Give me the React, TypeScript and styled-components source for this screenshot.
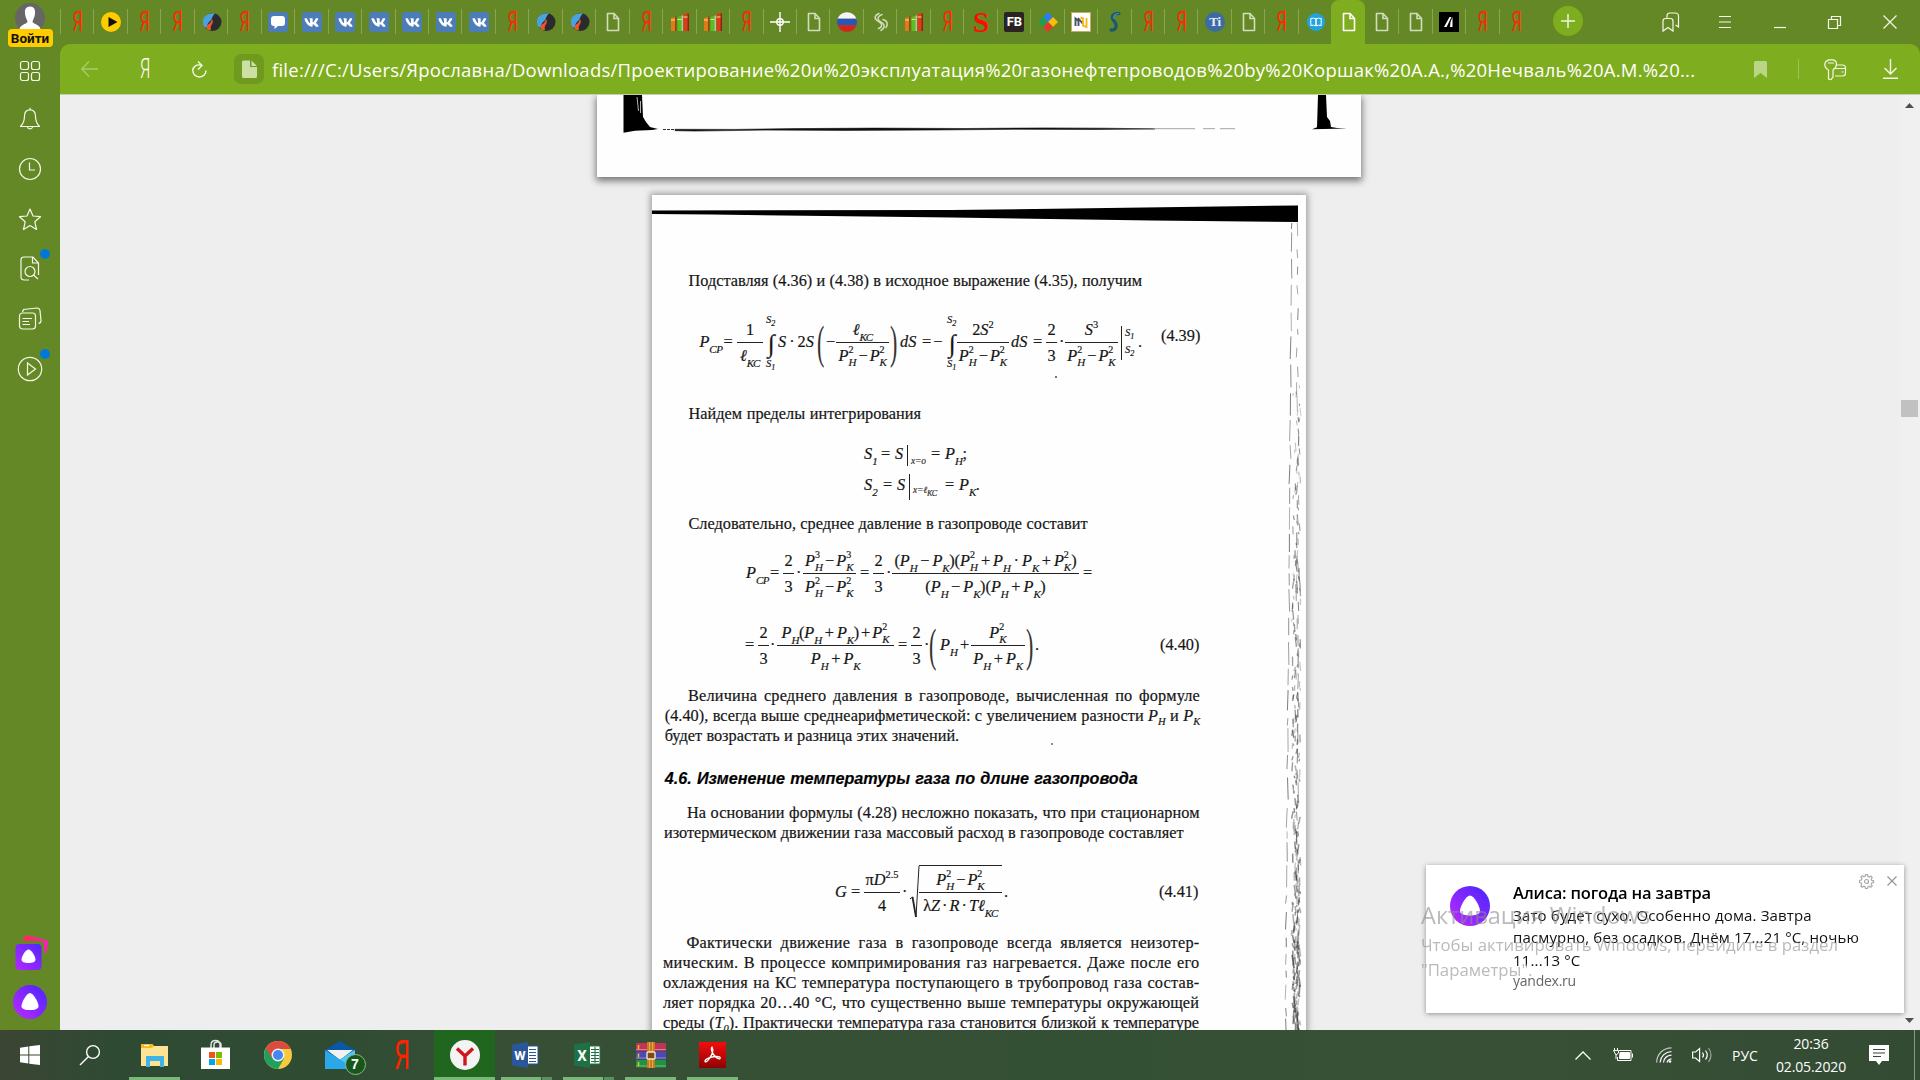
import React from "react";
import styled, { createGlobalStyle } from "styled-components";
import { FaVk } from "react-icons/fa";

const GlobalStyle = createGlobalStyle`
  * { box-sizing: border-box; }
  html, body { margin: 0; padding: 0; overflow: hidden; }
  body { background: #eeeeee; font-family: "Open Sans", "Noto Sans", sans-serif; }
  svg { display: block; flex: none; overflow: visible; }
`;

/* ---------- shell ---------- */

const Screen = styled.div`
  width: 1920px;
  height: 1080px;
  display: flex;
  flex-direction: column;
  overflow: hidden;
`;

const Browser = styled.div`
  flex: 1;
  min-height: 0;
  display: flex;
  background: #658826;
`;

const Sidebar = styled.aside`
  width: 60px;
  height: 1030px;
  display: flex;
  flex-direction: column;
  align-items: center;
`;

const Profile = styled.div`
  height: 48px;
  display: flex;
  flex-direction: column;
  align-items: center;
  padding-top: 3px;
`;

const LoginLabel = styled.span`
  width: 45px;
  height: 18px;
  margin-top: -4px;
  z-index: 1;
  border-radius: 4px;
  background: #ffcc00;
  color: #111;
  font: bold 13.5px/18px Roboto, sans-serif;
  text-align: center;
`;

const SideItem = styled.div<{ $dot?: boolean; $h?: number }>`
  position: relative;
  width: 60px;
  height: ${(p) => p.$h || 50}px;
  display: flex;
  align-items: center;
  justify-content: center;
  &::after {
    content: "";
    display: ${(p) => (p.$dot ? "block" : "none")};
    position: absolute;
    left: 40px;
    top: 5px;
    width: 10px;
    height: 10px;
    border-radius: 50%;
    background: #0078d7;
  }
`;

const SideSpacer = styled.div`
  flex: 1;
`;

const AliceGroup = styled.div`
  display: flex;
  flex-direction: column;
  align-items: center;
  gap: 14px;
  padding-bottom: 11px;
  & > :first-child { margin-left: 3px; }
`;

const Main = styled.main`
  flex: 1;
  min-width: 0;
  display: flex;
  flex-direction: column;
`;

/* ---------- tab strip ---------- */

const TabStrip = styled.div`
  height: 44px;
  display: flex;
`;

const Tabs = styled.div`
  width: 1472px;
  display: grid;
  grid-template-columns: repeat(44, 1fr);
`;

const Tab = styled.div<{ $active?: boolean; $line: boolean }>`
  position: relative;
  display: flex;
  align-items: center;
  justify-content: center;
  padding-left: 2px;
  background: ${(p) => (p.$active ? "#7fad20" : "transparent")};
  border-radius: ${(p) => (p.$active ? "8px 8px 0 0" : "0")};
  &::before {
    content: "";
    display: ${(p) => (p.$line ? "block" : "none")};
    position: absolute;
    left: 0;
    top: 9px;
    width: 1px;
    height: 25px;
    background: #8aa552;
  }
`;

const YaLetter = styled.span`
  color: #ff2a00;
  font: 27px/22px Roboto, sans-serif;
  transform: scaleX(0.6);
`;

const VkBox = styled.span`
  width: 20px;
  height: 20px;
  display: flex;
  align-items: center;
  justify-content: center;
  border-radius: 3px;
  background: #4d7db8;
  color: #fff;
  font-size: 15px;
`;

const Glyph = styled.span<{ $bg?: string; $fg: string; $round?: boolean; $font: string }>`
  width: 20px;
  height: 20px;
  display: flex;
  align-items: center;
  justify-content: center;
  background: ${(p) => p.$bg || "none"};
  color: ${(p) => p.$fg};
  border-radius: ${(p) => (p.$round ? "50%" : "2px")};
  font: ${(p) => p.$font};
`;

const NewTab = styled.div`
  width: 30px;
  height: 30px;
  margin: 6px 0 0 21px;
  border-radius: 50%;
  background: #7fad20;
  display: flex;
  align-items: center;
  justify-content: center;
`;

const WindowControls = styled.div`
  margin-left: auto;
  width: 277px;
  padding-right: 3px;
  display: grid;
  grid-template-columns: repeat(5, 1fr);
  align-items: center;
  justify-items: center;
`;

/* ---------- toolbar ---------- */

const Toolbar = styled.div`
  height: 51px;
  display: flex;
  align-items: center;
  background: #7fad20;
  border-bottom: 1px solid #c3cfae;
  border-radius: 10px 10px 0 0;
  padding: 0 22px 0 21px;
`;

const ThinYa = styled.span`
  width: 16px;
  margin-left: 39px;
  color: #fff;
  font: 300 27px/26px Roboto, sans-serif;
  transform: scaleX(0.62);
`;

const ReloadSlot = styled.span`
  margin-left: 39px;
`;

const FileBadge = styled.span`
  width: 30px;
  height: 30px;
  margin: 0 8px 0 27px;
  border-radius: 7px;
  background: #6f9a1f;
  display: flex;
  align-items: center;
  justify-content: center;
`;

const Address = styled.span`
  color: #fff;
  font: 18.5px/30px "Open Sans", "Noto Sans", sans-serif;
  letter-spacing: 0.235px;
  white-space: nowrap;
  padding-top: 1px;
`;

const ToolbarRight = styled.div`
  margin-left: auto;
  display: flex;
  align-items: center;
`;

const ToolDivider = styled.i`
  width: 1px;
  height: 20px;
  margin: 0 25px 0 31px;
  background: #9fc15a;
`;

const DownloadSlot = styled.span`
  margin-left: 37px;
`;

/* ---------- document ---------- */

const Viewport = styled.div`
  flex: 1;
  min-height: 0;
  height: 935px;
  display: flex;
  background: #eeeeee;
  overflow: hidden;
`;

const Pages = styled.div`
  width: 1840px;
  height: 935px;
  display: flex;
  flex-direction: column;
  align-items: center;
  overflow: hidden;
  padding-right: 2px;
`;

const ScrollTrack = styled.div`
  width: 20px;
  height: 935px;
  display: flex;
  flex-direction: column;
  align-items: center;
  padding: 8px 1px 7px 0;
  background: #f0f0f0;
`;

const ScrollThumb = styled.div`
  width: 17px;
  height: 17px;
  margin-top: 292px;
  margin-bottom: auto;
  background: #c1c1c1;
`;

const PreviousPage = styled.section`
  width: 764px;
  height: 82px;
  flex: none;
  background: #fefefe;
  box-shadow: 0 3px 7px 1px rgba(0, 0, 0, 0.5);
`;

const Page = styled.article`
  width: 654px;
  height: 900px;
  flex: none;
  margin-top: 18px;
  display: grid;
  background: #fefefe;
  box-shadow: 0 0 6px 2px rgba(0, 0, 0, 0.32);
  color: #141414;
  font: 16.3px/20px "Liberation Serif", serif;
  -webkit-text-stroke: 0.2px #222;
  & > * { grid-area: 1 / 1; }
`;

const PageText = styled.div`
  padding-top: 76px;
`;

const Line = styled.div<{ $x: number; $w: number; $gap?: number; $ls?: number }>`
  margin-left: ${(p) => p.$x}px;
  width: ${(p) => p.$w}px;
  height: 20px;
  margin-top: ${(p) => p.$gap || 0}px;
  letter-spacing: ${(p) => p.$ls || 0}px;
  white-space: nowrap;
  text-align: justify;
  text-align-last: justify;
`;

const Heading = styled(Line)`
  color: #000;
  font: italic bold 16.2px/20px "Liberation Sans", sans-serif;
`;

const Formula = styled.div<{ $x: number; $gap: number; $h?: number }>`
  margin-top: ${(p) => p.$gap}px;
  padding-left: ${(p) => p.$x}px;
  height: ${(p) => p.$h || 60}px;
  display: flex;
  align-items: center;
  white-space: nowrap;
`;

const Cell = styled.span<{ $w: number; $gap?: number; $up?: boolean }>`
  flex: none;
  width: ${(p) => p.$w}px;
  margin-left: ${(p) => p.$gap || 0}px;
  padding-bottom: ${(p) => (p.$up ? 15 : 3)}px;
  display: flex;
`;

const V = styled.i`
  font-style: italic;
`;

const Small = styled.i`
  height: 10px;
  margin-top: 12px;
  margin-bottom: -2px;
  font: italic 11px/10px "Liberation Serif", serif;
  letter-spacing: -0.5px;
`;

const InlineSub = styled.i`
  position: relative;
  top: 4px;
  font: italic 10.5px/10px "Liberation Serif", serif;
`;

const Stack = styled.span`
  display: inline-flex;
  flex-direction: column;
  justify-content: space-between;
  height: 22px;
  margin-top: -1px;
  margin-bottom: -1px;
  font: italic 11px/10px "Liberation Serif", serif;
  & > :first-child { font-style: normal; font-size: 10px; }
`;

const Superscript = styled.span`
  font: 10.5px/10px "Liberation Serif", serif;
`;

const Op = styled.span<{ $m?: number }>`
  margin: 0 ${(p) => p.$m ?? 2}px;
`;

const FractionBox = styled.span<{ $w: number; $gap?: number }>`
  flex: none;
  width: ${(p) => p.$w}px;
  margin-left: ${(p) => p.$gap || 0}px;
  height: 54px;
  display: grid;
  grid-template-rows: 26px 1px 27px;
  justify-items: center;
`;

const Numerator = styled.span`
  display: flex;
  align-self: end;
  padding-bottom: 2px;
`;

const Denominator = styled.span`
  display: flex;
  padding-top: 3px;
`;

const Rule = styled.i`
  width: 100%;
  height: 1px;
  background: #222;
`;

const IntegralBox = styled.span<{ $gap: number; $w: number }>`
  flex: none;
  width: ${(p) => p.$w}px;
  margin-left: ${(p) => p.$gap}px;
  display: flex;
  flex-direction: column;
  font: italic 10.5px/11px "Liberation Serif", serif;
  & > b { font: normal 25px/29px "Liberation Serif", serif; padding-left: 2px; }
`;

const Tiny = styled.span`
  font-size: 8px;
  vertical-align: -3px;
`;

const TallParen = styled.span<{ $gap: number }>`
  flex: none;
  width: 8px;
  margin-left: ${(p) => p.$gap}px;
  color: #333;
  font: 22px/22px "Liberation Serif", serif;
  -webkit-text-stroke: 0;
  transform: scaleY(2.15);
`;

const Limits = styled.span<{ $gap: number }>`
  flex: none;
  width: 17px;
  margin-left: ${(p) => p.$gap}px;
  padding-left: 3px;
  border-left: 1px solid #222;
  display: flex;
  flex-direction: column;
  font: italic 10.5px/13px "Liberation Serif", serif;
`;

const EvalBar = styled.i<{ $h: number }>`
  width: 1px;
  height: ${(p) => p.$h}px;
  margin-left: 3px;
  background: #222;
`;

const EvalSub = styled.i<{ $w: number }>`
  width: ${(p) => p.$w}px;
  margin-left: 3px;
  padding-top: 10px;
  font: italic 9.5px/10px "Liberation Serif", serif;
  letter-spacing: -0.2px;
  color: #444;
`;

const RootBox = styled.span`
  flex: none;
  display: flex;
  height: 54px;
  margin-left: 3px;
`;

const RootBody = styled.span`
  width: 83px;
  border-top: 1px solid #222;
  margin-top: -1px;
`;

/* ---------- notification ---------- */

const Notification = styled.aside`
  position: fixed;
  left: 1426px;
  top: 865px;
  width: 478px;
  height: 148px;
  display: flex;
  padding: 21px 12px 0 24px;
  background: #fff;
  box-shadow: 0 1px 5px rgba(0, 0, 0, 0.4);
`;

const NoticeText = styled.div`
  width: 348px;
  margin: -4px 0 0 23px;
  color: #111;
  font: 15px/22.4px "Open Sans", sans-serif;
  letter-spacing: 0.15px;
  white-space: nowrap;
`;

const NoticeTitle = styled.div`
  color: #000;
  font: 600 16.5px/22px "Open Sans", sans-serif;
  letter-spacing: -0.17px;
`;

const NoticeSource = styled.div`
  color: #666;
  font-size: 14px;
  line-height: 20px;
  letter-spacing: -0.25px;
`;

const NoticeActions = styled.div`
  margin: -14px 3px 0 auto;
  display: flex;
  align-items: center;
  gap: 13px;
  height: 18px;
`;

const Watermark = styled.div`
  position: fixed;
  left: 1421px;
  top: 898px;
  color: rgba(140, 140, 140, 0.6);
  font: 16.75px/25.4px "Open Sans", sans-serif;
  white-space: nowrap;
`;

const WatermarkTitle = styled.div`
  font-size: 23.6px;
  line-height: 34px;
`;

/* ---------- taskbar ---------- */

const Taskbar = styled.footer`
  height: 50px;
  flex: none;
  display: flex;
  background: linear-gradient(90deg, #3b4533 0, #2f4a33 110px, #2f4c33 330px, #375035 520px, #345034 1100px, #385136 1500px, #334b33 1920px);
`;

const TaskItem = styled.div<{ $w: number; $gap?: number; $bar?: boolean; $active?: boolean; $shift?: number }>`
  width: ${(p) => p.$w}px;
  margin-left: ${(p) => p.$gap || 0}px;
  height: 50px;
  display: flex;
  align-items: center;
  justify-content: center;
  background: ${(p) => (p.$active ? "#20661f" : "transparent")};
  border-bottom: 3px solid ${(p) => (p.$bar ? "#7ab87a" : "transparent")};
  padding-top: 3px;
  padding-left: ${(p) => p.$shift || 0}px;
`;

const StackedMark = styled.i`
  width: 10px;
  height: 3px;
  margin: 47px 0 0 1px;
  background: #5c8f5f;
`;

const TaskYa = styled.span`
  color: #ff2200;
  font: 41px/30px Roboto, sans-serif;
  transform: scaleX(0.62);
`;

const MailBox = styled.span`
  position: relative;
`;

const MailBadge = styled.span`
  position: absolute;
  left: 20px;
  top: 13px;
  width: 21px;
  height: 21px;
  border: 1px solid #8fb88f;
  border-radius: 50%;
  background: #17571b;
  color: #fff;
  font: bold 14px/19px "Liberation Sans", sans-serif;
  text-align: center;
`;

const Tray = styled.div`
  margin-left: auto;
  display: flex;
  align-items: center;
  color: #fff;
  font: 14px/23px "Open Sans", sans-serif;
`;

const TraySlot = styled.span<{ $w: number }>`
  width: ${(p) => p.$w}px;
  display: flex;
  justify-content: center;
  text-align: center;
`;

const Clock = styled.div`
  width: 78px;
  text-align: center;
  padding-bottom: 1px;
  letter-spacing: -0.12px;
`;

const ShowDesktop = styled.div`
  width: 6px;
  height: 50px;
  border-left: 1px solid #8a9a8a;
`;

/* ---------- icons ---------- */

const line = { fill: "none", stroke: "#f4f8e8", strokeWidth: 1.2 } as const;

const DocIcon = ({ color = "#d3dcbd" }: { color?: string }) => (
  <svg width="20" height="20" viewBox="0 0 20 20" fill="none" stroke={color} strokeWidth="1.6">
    <path d="M4.500 1.500h6.500l4.500 5V18.500H4.500z" strokeLinejoin="round" />
    <path d="M11 1.500v5H15.500" />
  </svg>
);

const PlayFav = () => (
  <svg width="20" height="20" viewBox="0 0 20 20">
    <circle cx="10" cy="10" r="10" fill="#ffcc00" />
    <path d="M7.500 5v10l9-5z" fill="#111" />
  </svg>
);

const FlameFav = () => (
  <svg width="20" height="20" viewBox="0 0 20 20">
    <circle cx="10.500" cy="10" r="9" fill="#2b2a2e" />
    <path d="M1 11C0 4 7 0 13 1.500 9 5 11 7 7 10c-2 2-2 5-2 6C2 15 1 13 1 11z" fill="#4aa3e0" />
    <path d="M5 17c-1-4 2-5 3-6s2-3 1.500-4.500c2.500 3 1 5 0 6.500S8.500 16 9 18c-2 0-3 0-4-1z" fill="#f0552c" />
  </svg>
);

const ChatFav = () => (
  <VkBox>
    <svg width="14" height="14" viewBox="0 0 14 14" fill="#fff">
      <path d="M3 1h8a3 3 0 0 1 3 3v4a3 3 0 0 1-3 3H7l-3.500 3v-3H3a3 3 0 0 1-3-3V4a3 3 0 0 1 3-3z" />
    </svg>
  </VkBox>
);

const BooksFav = () => (
  <svg width="20" height="20" viewBox="0 0 20 20">
    <path d="M1 6l4-1v14H1z" fill="#e07b1c" />
    <path d="M5 5l1.500-1v15H5z" fill="#8a4a10" />
    <path d="M7.500 5l4-1v15h-4z" fill="#56c022" />
    <path d="M11.500 4L13 3v16h-1.500z" fill="#b9c7a0" />
    <path d="M13.500 2l4-1v18h-4z" fill="#e03a1a" />
    <path d="M17.500 1l1.500 1v17h-1.500z" fill="#9c1c10" />
    <path d="M1 8h4M7.500 7.500h4M13.500 5h4" stroke="#ffd890" strokeWidth="1" />
  </svg>
);

const CrossFav = () => (
  <svg width="20" height="20" viewBox="0 0 20 20" fill="none" stroke="#fff" strokeWidth="1.400">
    <path d="M10 0v20M0 10h20" />
    <circle cx="10" cy="10" r="3.200" />
  </svg>
);

const FlagFav = () => (
  <svg width="20" height="20" viewBox="0 0 20 20">
    <path d="M0.600 6.800a10 10 0 0 1 18.800 0z" fill="#f5f5f5" />
    <path d="M0.600 6.800h18.800a10 10 0 0 1 0 6.400H0.600a10 10 0 0 1 0-6.400z" fill="#2a56b8" />
    <path d="M0.600 13.200h18.800a10 10 0 0 1-18.800 0z" fill="#d4241c" />
  </svg>
);

const SwirlFav = () => (
  <svg width="20" height="20" viewBox="0 0 20 20" fill="none" stroke="#d5dfbf" strokeWidth="1.500" strokeLinecap="round">
    <path d="M8 1.500C4 3 3 6 5.500 8l4.500 3.500c1.500 2 .5 4-2.500 5" />
    <path d="M11 2.500C7 4 6 6.500 8 8.500l4 3c2 2 1.500 5-2 7" />
    <path d="M12 7.500c4 1 5.500 4 3 8" />
  </svg>
);

const DiamondFav = () => (
  <svg width="20" height="20" viewBox="0 0 20 20">
    <path d="M10 0l5 5-5 5-5-5z" fill="#2f7bee" />
    <path d="M5 5l5 5-5 5-5-5z" fill="#1fa050" />
    <path d="M15 5l5 5-5 5-5-5z" fill="#fbbc05" />
    <path d="M10 10l5 5-5 5-5-5z" fill="#e5382c" />
  </svg>
);

const NFav = () => (
  <svg width="20" height="20" viewBox="0 0 20 20">
    <rect x="0.500" y="0.500" width="19" height="19" fill="#fff" stroke="#c9a86a" />
    <path d="M4.500 14V6.500l3 2.500v5M7 6l5 6" fill="none" stroke="#4a525e" strokeWidth="1.900" />
    <path d="M9.500 5.500l2.500 1v7l3.500 1.500V6" fill="none" stroke="#f3b81b" strokeWidth="1.900" />
  </svg>
);

const BlueSFav = () => (
  <svg width="20" height="20" viewBox="0 0 20 20" fill="none" strokeLinecap="round">
    <path d="M14 1.500C9 1 6 3.500 8 7.500c2 3 4 4 3 7.500-.7 2.500-3 3.500-5 3" stroke="#1d5872" strokeWidth="3.200" />
    <path d="M13.500 1.500C10.500 1.500 8 3.500 9 6.500" stroke="#4f98a9" strokeWidth="1.200" />
  </svg>
);

const BookFav = () => (
  <svg width="18" height="18" viewBox="0 0 18 18">
    <circle cx="9" cy="9" r="9" fill="#22a3dc" />
    <path d="M3.800 5.500q3-.8 5.200.3v7q-2.200-1-5.200-.3zM9 5.800q2.200-1.100 5.200-.3v7q-3-.7-5.200.3z" fill="none" stroke="#fff" strokeWidth="1" />
  </svg>
);

const BlackAFav = () => (
  <svg width="20" height="20" viewBox="0 0 20 20">
    <rect width="20" height="20" fill="#000" />
    <path d="M5 15l5.500-10h2L7.500 15zM11.500 10l2-5v10h-2.500z" fill="#fff" />
  </svg>
);

const AliceIcon = ({ size, id }: { size: number; id: string }) => (
  <svg width={size} height={size} viewBox="0 0 40 40">
    <defs>
      <linearGradient id={id} x1="0" y1="1" x2="1" y2="0">
        <stop offset="0.100" stopColor="#b528ff" />
        <stop offset="0.900" stopColor="#5226ff" />
      </linearGradient>
    </defs>
    <circle cx="20" cy="20" r="20" fill={`url(#${id})`} />
    <path d="M20 9.500c4 0 10 11 10 15.500 0 3.500-5 4.500-10 4.500s-10-1-10-4.500c0-4.500 6-15.500 10-15.500z" fill="#fff" />
  </svg>
);

const AliceCards = () => (
  <svg width="34" height="36" viewBox="0 0 34 36">
    <defs>
      <linearGradient id="cardFill" x1="0" y1="1" x2="1" y2="0">
        <stop offset="0" stopColor="#b528ff" />
        <stop offset="1" stopColor="#5226ff" />
      </linearGradient>
      <linearGradient id="cardBack" x1="0" y1="0" x2="1" y2="0">
        <stop offset="0" stopColor="#ff2b4e" />
        <stop offset="1" stopColor="#ff1cc0" />
      </linearGradient>
    </defs>
    <path d="M8 6l1-4q1-2 4-1.500l17 4q3.500 1 3 4l-2 10-2-1V10q0-4-4-4z" fill="url(#cardBack)" />
    <rect x="0.500" y="9" width="26" height="26" rx="4" fill="url(#cardFill)" />
    <path d="M13.500 14.500c3 0 7 7 7 10 0 2.500-3 3.500-7 3.500s-7-1-7-3.500c0-3 4-10 7-10z" fill="#fff" />
  </svg>
);

const MarginNoise = () => {
  let seed = 7;
  const rnd = () => {
    seed = (seed * 16807) % 2147483647;
    return seed / 2147483647;
  };
  const marks: React.ReactNode[] = [];
  const add = (x: number, y: number, h: number, w: number, o: number) =>
    marks.push(
      <path key={marks.length} d={`M${x.toFixed(1)} ${y.toFixed(1)}l${((rnd() - 0.5) * w * 2).toFixed(1)} ${h.toFixed(1)}`} strokeWidth={w} opacity={o} />
    );
  for (let y = 28; y < 835; ) {
    const d = y / 835;
    const h = 6 + rnd() * 18;
    add(640 - d * 6.500, y, h, 0.900, 0.400 + rnd() * 0.350);
    y += h + 2 + rnd() * 7;
  }
  for (let y = 28; y < 835; ) {
    const d = y / 835;
    const h = 4 + rnd() * 12;
    add(644.500 + rnd() * 2, y, h, 0.900, 0.350 + rnd() * 0.350);
    y += h + 1 + rnd() * (14 - 9 * d);
  }
  for (let y = 190; y < 835; ) {
    const d = y / 835;
    add(641 + rnd() * 8 - d, y, 2 + rnd() * 8, 0.800 + d * 0.900, 0.250 + rnd() * 0.350);
    y += 0.800 + rnd() * (11 - 10.500 * d);
  }
  return (
    <svg width="654" height="835" viewBox="0 0 654 835" fill="none" stroke="#333">
      <path d="M0 15.500L300 15 646 10.500V27L500 25.500 300 22.500 60 19.500 0 19z" fill="#000" stroke="none" />
      <circle cx="404" cy="182" r="0.900" fill="#333" stroke="none" />
      <circle cx="400" cy="549" r="0.900" fill="#555" stroke="none" />
      {marks}
    </svg>
  );
};

const ScanFrame = () => (
  <svg width="764" height="82" viewBox="0 0 764 82">
    <path d="M26.500 0H45l1 22 3 5 4 5 8 2-6 1-17 .8-11.500 2z" fill="#000" />
    <path d="M40 2l1.500 14M43.500 6v12" stroke="#fff" strokeWidth="0.700" />
    <path d="M66 34.500h12" stroke="#333" strokeWidth="1.200" strokeDasharray="3 1" />
    <path d="M78 34.300l60 .1 60-.8 80-.5 90 .4 80-.6 60 .3 50 .7-60 .6-80-.2-80 .7-90 .4-80-.3-70 1-20-.4z" fill="#111" stroke="#111" strokeWidth="0.600" />
    <path d="M556 33.700h42m8 0h12m5 0h15" stroke="#999" strokeWidth="0.900" />
    <path d="M721 0h8l1 22 3 4 1 6 6 1 10 .5-35 .8 5-2z" fill="#000" />
  </svg>
);

const favicon = (kind: string) => {
  switch (kind) {
    case "ya": return <YaLetter>Я</YaLetter>;
    case "play": return <PlayFav />;
    case "flame": return <FlameFav />;
    case "chat": return <ChatFav />;
    case "vk": return <VkBox><FaVk /></VkBox>;
    case "books": return <BooksFav />;
    case "cross": return <CrossFav />;
    case "flag": return <FlagFav />;
    case "swirl": return <SwirlFav />;
    case "s": return <Glyph $fg="#ff0d00" $font='bold 29px/20px "Liberation Serif", serif'>S</Glyph>;
    case "fb": return <Glyph $bg="#2a2324" $fg="#fff" $font='bold 13px/20px Roboto, sans-serif'>FB</Glyph>;
    case "diamond": return <DiamondFav />;
    case "n": return <NFav />;
    case "blue-s": return <BlueSFav />;
    case "ti": return <Glyph $bg="#3c6ba5" $fg="#e8eef8" $round $font='bold 13px/20px "Liberation Serif", serif'>Ti</Glyph>;
    case "book": return <BookFav />;
    case "a": return <BlackAFav />;
    case "active": return <DocIcon color="#fff" />;
    default: return <DocIcon />;
  }
};

const tabs =
  "ya play ya ya flame ya chat vk vk vk vk vk vk ya flame flame doc ya books books ya cross doc flag swirl books ya s fb diamond n blue-s ya ya ti doc ya book active doc doc a ya ya".split(" ");

/* ---------- formula parts ---------- */

const Var = ({ b = "P", sub, sup }: { b?: string; sub?: string; sup?: string }) => (
  <>
    <V>{b}</V>
    {sup ? <Stack><span>{sup}</span><span>{sub}</span></Stack> : <Small>{sub}</Small>}
  </>
);

const Frac = ({ w, gap, n, d }: { w: number; gap?: number; n: React.ReactNode; d: React.ReactNode }) => (
  <FractionBox $w={w} $gap={gap}>
    <Numerator>{n}</Numerator>
    <Rule />
    <Denominator>{d}</Denominator>
  </FractionBox>
);

const TwoThirds = ({ gap }: { gap: number }) => <Frac w={11} gap={gap} n="2" d="3" />;

const Integral = ({ gap, w }: { gap: number; w: number }) => (
  <IntegralBox $gap={gap} $w={w}>
    <span>S<Tiny>2</Tiny></span>
    <b>∫</b>
    <span>S<Tiny>1</Tiny></span>
  </IntegralBox>
);

const diffOf = (p: string) => (
  <>
    <Var sub="H" sup={p} /><Op>−</Op><Var sub="К" sup={p} />
  </>
);

export default function App() {
  return (
    <Screen>
      <GlobalStyle />
      <Browser>
        <Sidebar>
          <Profile>
            <svg width="30" height="30" viewBox="0 0 30 30">
              <circle cx="15" cy="15" r="15" fill="#666" />
              <path d="M15 3.500c4 0 5.500 3 5 7-.3 4-2 6-2.500 8 .5 3 7 2.500 8 7.500H4.500c1-5 7.500-4.500 8-7.500-.5-2-2.200-4-2.500-8-.5-4 1-7 5-7z" fill="#fff" />
            </svg>
            <LoginLabel>Войти</LoginLabel>
          </Profile>
          <SideItem $h={46}>
            <svg width="22" height="22" viewBox="0 0 22 22" {...line}>
              <rect x="1.500" y="1.500" width="8" height="8" rx="2" /><rect x="12.500" y="1.500" width="8" height="8" rx="2" />
              <rect x="1.500" y="12.500" width="8" height="8" rx="2" /><rect x="12.500" y="12.500" width="8" height="8" rx="2" />
            </svg>
          </SideItem>
          <SideItem>
            <svg width="22" height="24" viewBox="0 0 22 24" {...line}>
              <path d="M11 .8v2M11 2.800c-4 0-5.500 3-5.500 6.200 0 5-1 7.500-4 10.500h19C17.500 16.500 16.500 14 16.500 9c0-3.200-1.500-6.200-5.500-6.200zM8.500 20c.5 2.500 4.500 2.500 5 0" strokeLinejoin="round" />
            </svg>
          </SideItem>
          <SideItem>
            <svg width="24" height="24" viewBox="0 0 24 24" {...line}>
              <circle cx="12" cy="12" r="10.500" /><path d="M11.500 5.500v7.500H17" />
            </svg>
          </SideItem>
          <SideItem>
            <svg width="24" height="24" viewBox="0 0 24 24" {...line}>
              <path d="M12 2l3 7 7.500.7-5.700 5 1.700 7.800L12 18.500l-6.500 4 1.700-7.800-5.700-5L9 9z" strokeLinejoin="round" />
            </svg>
          </SideItem>
          <SideItem $dot>
            <svg width="20" height="26" viewBox="0 0 20 26" {...line}>
              <path d="M9 24H4.500Q1 24 1 21V4q0-3 3-3h9l5.500 6v12M12.500 1v6h6" />
              <circle cx="10" cy="15.500" r="5" /><path d="M13.500 19l4.500 4" />
            </svg>
          </SideItem>
          <SideItem>
            <svg width="24" height="24" viewBox="0 0 24 24" {...line}>
              <rect x="1.500" y="6" width="16" height="16" rx="3" />
              <path d="M4.500 5l1-2.500L19 1q2.500 0 3 2.500l1 10q0 2.500-2.500 3M4.500 11.500H14M4.500 14.500H11M4.500 17.500H12" />
            </svg>
          </SideItem>
          <SideItem $dot>
            <svg width="26" height="26" viewBox="0 0 26 26" {...line}>
              <circle cx="13" cy="13" r="11.700" /><path d="M10.500 7v12l8-6z" />
            </svg>
          </SideItem>
          <SideSpacer />
          <AliceGroup>
            <AliceCards />
            <AliceIcon size={34} id="aliceSide" />
          </AliceGroup>
        </Sidebar>

        <Main>
          <TabStrip>
            <Tabs>
              {tabs.map((t, i) => (
                <Tab key={i} $active={t === "active"} $line={t !== "active" && tabs[i - 1] !== "active"}>
                  {favicon(t)}
                </Tab>
              ))}
            </Tabs>
            <NewTab>
              <svg width="14" height="14" viewBox="0 0 14 14" stroke="#eef5dc" strokeWidth="1.500"><path d="M7 0v14M0 7h14" /></svg>
            </NewTab>
            <WindowControls>
              <svg width="17" height="20" viewBox="0 0 17 20" {...line}>
                <path d="M1 19V9q0-2.500 2.500-2.500h5Q11 6.500 11 9v10l-5-3.500zM5 6V4q0-3 3-3h5q3.500 0 3.500 3v11l-3-2" />
              </svg>
              <svg width="12" height="12" viewBox="0 0 12 12" {...line}><path d="M0 .5h12M0 6h12M0 11.500h12" /></svg>
              <svg width="12" height="12" viewBox="0 0 12 12" {...line}><path d="M0 11.500h12" /></svg>
              <svg width="13" height="13" viewBox="0 0 13 13" {...line}><path d="M.5 3.500h9v9h-9zM3.500 3.500v-3h9v9h-3" /></svg>
              <svg width="14" height="14" viewBox="0 0 14 14" {...line}><path d="M.5.5l13 13M13.500.5l-13 13" /></svg>
            </WindowControls>
          </TabStrip>

          <Toolbar>
            <svg width="17" height="16" viewBox="0 0 17 16" fill="none" stroke="#a9cc68" strokeWidth="1.300"><path d="M8 .5L.8 8 8 15.500M.8 8H17" /></svg>
            <ThinYa>Я</ThinYa>
            <ReloadSlot>
              <svg width="15" height="17" viewBox="0 0 15 17" {...line} strokeWidth="1.400"><path d="M6 .5l4 4-4 4M9.500 4.200C4 3 .8 6 .8 9.500S3.500 16 7.500 16s6.500-3 6.500-6.500" /></svg>
            </ReloadSlot>
            <FileBadge>
              <svg width="15" height="18" viewBox="0 0 15 18" fill="#cbe0a5"><path d="M0 2q0-1.500 1.500-1.500H8V7h7v9.500q0 1.500-1.500 1.500h-12Q0 18 0 16.500zM9.500.5L15 6H9.500z" /></svg>
            </FileBadge>
            <Address>
              file:///C:/Users/Ярославна/Downloads/Проектирование%20и%20эксплуатация%20газонефтепроводов%20by%20Коршак%20А.А.,%20Нечваль%20А.М.%20...
            </Address>
            <ToolbarRight>
              <svg width="13" height="17" viewBox="0 0 13 17" fill="#b9d585"><path d="M0 1.500Q0 0 1.500 0h10Q13 0 13 1.500V17l-6.500-5L0 17z" /></svg>
              <ToolDivider />
              <svg width="22" height="21" viewBox="0 0 22 21" {...line}>
                <path d="M4.500 20V11Q.8 9 .8 5.500T5 .8h4Q12.500 1.500 12.500 5T9 11v7l-2 2.500zM4 4h6M12.500 6h6q3 0 3 3v5q0 3-3 3H11M11 9.500h10.500M17.500 13h2" />
              </svg>
              <DownloadSlot>
                <svg width="15" height="20" viewBox="0 0 15 20" {...line} strokeWidth="1.400"><path d="M7.500 0v15M1.500 9l6 6 6-6M0 19.300h15" /></svg>
              </DownloadSlot>
            </ToolbarRight>
          </Toolbar>

          <Viewport>
            <Pages>
              <PreviousPage><ScanFrame /></PreviousPage>
              <Page>
                <MarginNoise />
                <PageText>
                  <Line $x={36.5} $w={453.500}>Подставляя (4.36) и (4.38) в исходное выражение (4.35), получим</Line>

                  <Formula $x={47.4} $gap={22}>
                    <Cell $w={21}><Var sub="CP" /></Cell>
                    <Cell $w={10} $gap={3}>=</Cell>
                    <Frac w={26} gap={3.600} n="1" d={<Var b="ℓ" sub=" КС" />} />
                    <Integral gap={3} w={12} />
                    <Cell $w={38}><V>S</V><Op $m={3}>·</Op>2<V>S</V></Cell>
                    <TallParen $gap={1}>(</TallParen>
                    <Cell $w={8} $gap={1}>−</Cell>
                    <Frac w={52.500} gap={2.500} n={<Var b="ℓ" sub=" КС" />} d={diffOf("2")} />
                    <TallParen $gap={1}>)</TallParen>
                    <Cell $w={20} $gap={2}><V>dS</V></Cell>
                    <Cell $w={22} $gap={2}>=<Op $m={2}>−</Op></Cell>
                    <Integral gap={3} w={10} />
                    <Frac w={52} n={<>2<V>S</V><Superscript>2</Superscript></>} d={diffOf("2")} />
                    <Cell $w={20} $gap={2}><V>dS</V></Cell>
                    <Cell $w={11} $gap={2}>=</Cell>
                    <TwoThirds gap={2} />
                    <Cell $w={5} $gap={2}>·</Cell>
                    <Frac w={53} gap={1} n={<><V>S</V><Superscript>3</Superscript></>} d={diffOf("2")} />
                    <Limits $gap={3}><span>S<Tiny>1</Tiny></span><span>S<Tiny>2</Tiny></span></Limits>
                    <Cell $w={5} $gap={0}>.</Cell>
                    <Cell $w={41} $gap={18} $up>(4.39)</Cell>
                  </Formula>

                  <Line $x={36.5} $w={232.500} $gap={31}>Найдем пределы интегрирования</Line>

                  <Formula $x={212} $gap={16} $h={31}>
                    <Cell $w={14}><Var b="S" sub="1" /></Cell>
                    <Cell $w={10} $gap={3}>=</Cell>
                    <Cell $w={9} $gap={4}><V>S</V></Cell>
                    <EvalBar $h={21} />
                    <EvalSub $w={18}>x=o</EvalSub>
                    <Cell $w={10} $gap={2}>=</Cell>
                    <Cell $w={24} $gap={4}><Var sub="H" />;</Cell>
                  </Formula>
                  <Formula $x={212} $gap={0} $h={31}>
                    <Cell $w={16}><Var b="S" sub="2" /></Cell>
                    <Cell $w={10} $gap={3}>=</Cell>
                    <Cell $w={9} $gap={4}><V>S</V></Cell>
                    <EvalBar $h={26} />
                    <EvalSub $w={28}>x=ℓ<Tiny>КС</Tiny></EvalSub>
                    <Cell $w={10} $gap={4}>=</Cell>
                    <Cell $w={24} $gap={4}><Var sub="К" />.</Cell>
                  </Formula>

                  <Line $x={36.5} $w={399} $gap={12}>Следовательно, среднее давление в газопроводе составит</Line>

                  <Formula $x={94} $gap={10}>
                    <Cell $w={21}><Var sub="CP" /></Cell>
                    <Cell $w={10} $gap={3}>=</Cell>
                    <TwoThirds gap={3} />
                    <Cell $w={5} $gap={2}>·</Cell>
                    <Frac w={53.400} gap={1.600} n={diffOf("3")} d={diffOf("2")} />
                    <Cell $w={10} $gap={4}>=</Cell>
                    <TwoThirds gap={3} />
                    <Cell $w={5} $gap={2}>·</Cell>
                    <Frac
                      w={187}
                      gap={1}
                      n={<>(<Var sub="H" /><Op $m={3}>−</Op><Var sub="К" />)(<Var sub="H" sup="2" /><Op $m={3}>+</Op><Var sub="H" /><Op $m={3}>·</Op><Var sub="К" /><Op $m={3}>+</Op><Var sub="К" sup="2" />)</>}
                      d={<>(<Var sub="H" /><Op $m={3}>−</Op><Var sub="К" />)(<Var sub="H" /><Op $m={3}>+</Op><Var sub="К" />)</>}
                    />
                    <Cell $w={10} $gap={4}>=</Cell>
                  </Formula>

                  <Formula $x={93} $gap={12}>
                    <Cell $w={10}>=</Cell>
                    <TwoThirds gap={3} />
                    <Cell $w={5} $gap={1}>·</Cell>
                    <Frac
                      w={117}
                      gap={2}
                      n={<><Var sub="H" />(<Var sub="H" /><Op $m={3}>+</Op><Var sub="К" />)<Op>+</Op><Var sub="К" sup="2" /></>}
                      d={<><Var sub="H" /><Op $m={3}>+</Op><Var sub="К" /></>}
                    />
                    <Cell $w={10} $gap={4}>=</Cell>
                    <TwoThirds gap={3} />
                    <Cell $w={4} $gap={2}>·</Cell>
                    <TallParen $gap={1}>(</TallParen>
                    <Cell $w={16} $gap={3}><Var sub="H" /></Cell>
                    <Cell $w={9} $gap={4}>+</Cell>
                    <Frac w={54} gap={2} n={<Var sub="К" sup="2" />} d={<><Var sub="H" /><Op $m={3}>+</Op><Var sub="К" /></>} />
                    <TallParen $gap={1}>)</TallParen>
                    <Cell $w={4} $gap={1}>.</Cell>
                    <Cell $w={41} $gap={121}>(4.40)</Cell>
                  </Formula>

                  <Line $x={36} $w={512} $gap={10} $ls={0.180}>Величина среднего давления в газопроводе, вычисленная по формуле</Line>
                  <Line $x={12.700} $w={535.500} $ls={0.020}>
                    (4.40), всегда выше среднеарифметической: с увеличением разности <V>P</V><InlineSub>H</InlineSub> и <V>P</V><InlineSub>К</InlineSub>
                  </Line>
                  <Line $x={12.700} $w={294.500}>будет возрастать и разница этих значений.</Line>

                  <Heading $x={12.700} $w={473} $gap={22}>4.6. Изменение температуры газа по длине газопровода</Heading>

                  <Line $x={35} $w={512.500} $gap={15} $ls={0.050}>На основании формулы (4.28) несложно показать, что при стационарном</Line>
                  <Line $x={12} $w={519.500}>изотермическом движении газа массовый расход в газопроводе составляет</Line>

                  <Formula $x={183} $gap={20}>
                    <Cell $w={13}><V>G</V></Cell>
                    <Cell $w={10} $gap={3}>=</Cell>
                    <Frac w={36} gap={3} n={<>π<V>D</V><Superscript>2.5</Superscript></>} d="4" />
                    <Cell $w={5} $gap={2}>·</Cell>
                    <RootBox>
                      <svg width="9" height="54" viewBox="0 0 9 54" fill="none" stroke="#222">
                        <path d="M0 33l2.500-2" strokeWidth="1" />
                        <path d="M2.500 31l3.500 20" strokeWidth="1.800" />
                        <path d="M6 51L9 0" strokeWidth="1" />
                      </svg>
                      <RootBody>
                        <Frac w={83} n={diffOf("2")} d={<>λ<V>Z</V><Op>·</Op><V>R</V><Op>·</Op><V>T</V><Var b="ℓ" sub="КС" /></>} />
                      </RootBody>
                    </RootBox>
                    <Cell $w={4} $gap={2}>.</Cell>
                    <Cell $w={41} $gap={151}>(4.41)</Cell>
                  </Formula>

                  <Line $x={34.500} $w={513} $gap={10} $ls={0.250}>Фактически движение газа в газопроводе всегда является неизотер-</Line>
                  <Line $x={11} $w={536.500} $ls={0.250}>мическим. В процессе компримирования газ нагревается. Даже после его</Line>
                  <Line $x={11} $w={536.500} $ls={0.200}>охлаждения на КС температура поступающего в трубопровод газа состав-</Line>
                  <Line $x={11} $w={536} $ls={0.100}>ляет порядка 20…40 °C, что существенно выше температуры окружающей</Line>
                  <Line $x={11} $w={536} $ls={-0.050}>
                    среды (<V>T</V><InlineSub>0</InlineSub>). Практически температура газа становится близкой к температуре
                  </Line>
                </PageText>
              </Page>
            </Pages>
            <ScrollTrack>
              <svg width="9" height="5" viewBox="0 0 9 5"><path d="M4.500 0L9 5H0z" fill="#505050" /></svg>
              <ScrollThumb />
              <svg width="9" height="5" viewBox="0 0 9 5"><path d="M0 0h9L4.500 5z" fill="#505050" /></svg>
            </ScrollTrack>
          </Viewport>
        </Main>
      </Browser>

      <Taskbar>
        <TaskItem $w={60}>
          <svg width="20" height="20" viewBox="0 0 20 20" fill="#fff"><path d="M0 2.700l8.300-1.200v8H0zM9.300 1.300L20 0v9.500H9.300zM0 10.500h8.300v8L0 17.300zM9.300 10.500H20V20L9.300 18.700z" /></svg>
        </TaskItem>
        <TaskItem $w={60}>
          <svg width="20" height="20" viewBox="0 0 20 20" fill="none" stroke="#fff" strokeWidth="1.400"><circle cx="13" cy="7" r="6.400" /><path d="M8.500 11.500L0 20" /></svg>
        </TaskItem>
        <TaskItem $w={51} $gap={9} $bar>
          <svg width="28" height="24" viewBox="0 0 28 24">
            <path d="M0 1.500Q0 1 1 1h10l2 2h14v20H0z" fill="#ffe394" />
            <path d="M0 1.500Q0 1 1 1h10l2 2-2 2H0z" fill="#f5b921" />
            <path d="M3 2.500h5" stroke="#fff" strokeWidth="1.200" />
            <path d="M5 24V13h18v11h-4v-6h-10v6z" fill="#3db3e8" />
          </svg>
        </TaskItem>
        <TaskItem $w={51} $gap={10}>
          <svg width="30" height="30" viewBox="0 0 30 30">
            <path d="M10 8V5q0-4.500 4.500-4.500T19 5v3M13 8V5q0-3 3.500-3T20 5v3" fill="none" stroke="#dfe5df" strokeWidth="1.500" />
            <path d="M0 7.500h29V29H0z" fill="#fff" />
            <path d="M8 12h6v6H8z" fill="#f1511b" /><path d="M15 12h6v6h-6z" fill="#80bb03" />
            <path d="M8 19h6v6H8z" fill="#03a4ee" /><path d="M15 19h6v6h-6z" fill="#fbb809" />
          </svg>
        </TaskItem>
        <TaskItem $w={51} $gap={11}>
          <svg width="28" height="28" viewBox="0 0 28 28">
            <circle cx="14" cy="14" r="14" fill="#fbc93d" />
            <path d="M14 14L1.900 7A14 14 0 0 0 14 28l6-10.500z" fill="#1fa15d" />
            <path d="M14 8h12.600A14 14 0 0 0 1.900 7l6.100 10.500z" fill="#dc4b3f" />
            <circle cx="14" cy="14" r="6.500" fill="#f1f1f1" /><circle cx="14" cy="14" r="5" fill="#4688f1" />
          </svg>
        </TaskItem>
        <TaskItem $w={51} $gap={11}>
          <MailBox>
            <svg width="30" height="28" viewBox="0 0 30 28">
              <path d="M0 9L15 0l15 9v4H0z" fill="#0a57a5" />
              <path d="M2 9h26L15 19z" fill="#f2f2f2" />
              <path d="M0 9l15 9.500L30 9v19H0z" fill="#2aa8ea" />
              <path d="M30 9v19L15 18.500z" fill="#51c7f5" />
            </svg>
            <MailBadge>7</MailBadge>
          </MailBox>
        </TaskItem>
        <TaskItem $w={51} $gap={12}><TaskYa>Я</TaskYa></TaskItem>
        <TaskItem $w={61} $gap={6} $bar $active>
          <svg width="30" height="30" viewBox="0 0 30 30">
            <circle cx="15" cy="15" r="15" fill="#f3f3f3" />
            <path d="M7 8.500l8 7.500 8-7.500M15 15v10.500" fill="none" stroke="#d0161c" strokeWidth="3.400" />
          </svg>
        </TaskItem>
        <TaskItem $w={40} $gap={6} $shift={9} $bar>
          <svg width="27" height="26" viewBox="0 0 27 26">
            <path d="M15 4h11v18H15z" fill="#fff" stroke="#2b579a" />
            <path d="M17 7.500h7M17 10.500h7M17 13.500h7M17 16.500h7M17 19.500h7" stroke="#2b579a" strokeWidth="1.200" />
            <path d="M0 2.500L16 0v26L0 23.500z" fill="#2b579a" />
            <text x="8" y="18" fill="#fff" fontFamily="Roboto, sans-serif" fontSize="13" fontWeight="700" textAnchor="middle">W</text>
          </svg>
        </TaskItem>
        <StackedMark />
        <TaskItem $w={40} $gap={11} $shift={9} $bar>
          <svg width="27" height="26" viewBox="0 0 27 26">
            <path d="M15 4h11v18H15z" fill="#fff" stroke="#1e7145" />
            <path d="M17 7.500h8M17 10.500h8M17 13.500h8M17 16.500h8M17 19.500h8M21 5v16" stroke="#1e7145" strokeWidth="1.100" />
            <path d="M0 2.500L16 0v26L0 23.500z" fill="#1e7145" />
            <text x="8" y="18.500" fill="#fff" fontFamily="Roboto, sans-serif" fontSize="15" fontWeight="700" textAnchor="middle">X</text>
          </svg>
        </TaskItem>
        <StackedMark />
        <TaskItem $w={51} $gap={11} $bar>
          <svg width="30" height="26" viewBox="0 0 30 26">
            <rect y="1" width="30" height="8" rx="1" fill="#c2335a" /><rect y="9.500" width="30" height="8" rx="1" fill="#4a49b8" /><rect y="18" width="30" height="7.500" rx="1" fill="#1f9440" />
            <path d="M0 7.500h30M0 16h30M0 24h30" stroke="#e8d9c8" strokeWidth="0.800" opacity="0.600" />
            <path d="M2.500 3v4M2.500 11.500v4M2.500 20v4" stroke="#f0c020" strokeWidth="1.500" />
            <rect x="11" y="0" width="8" height="26" fill="#c8791f" />
            <path d="M13.500 0v26M16.500 0v26" stroke="#e8a850" />
            <rect x="11" y="10" width="8" height="7" rx="1" fill="#7a4a12" stroke="#f2e6c8" strokeWidth="1.400" />
          </svg>
        </TaskItem>
        <TaskItem $w={51} $gap={11} $bar>
          <svg width="27" height="26" viewBox="0 0 27 26">
            <defs><linearGradient id="pdf" x1="0" y1="0" x2="0" y2="1"><stop offset="0" stopColor="#f50c0c" /><stop offset="1" stopColor="#8d0303" /></linearGradient></defs>
            <rect width="27" height="26" fill="url(#pdf)" />
            <path d="M13 5c2 3 0 8-3 12-1.500 2.500-4 4-4 2s6-4 10-4.500 6 1 5 2-4-.5-6.500-4S12 5.500 13 5z" fill="none" stroke="#fff" strokeWidth="1.300" />
          </svg>
        </TaskItem>
        <Tray>
          <TraySlot $w={40}>
            <svg width="16" height="9" viewBox="0 0 16 9" fill="none" stroke="#fff" strokeWidth="1.300"><path d="M.5 8.500L8 1l7.500 7.500" /></svg>
          </TraySlot>
          <TraySlot $w={40}>
            <svg width="20" height="14" viewBox="0 0 20 14" fill="none" stroke="#fff">
              <path d="M6 2.500h12v10H4.500V9" /><path d="M7 4.500h9.500v6h-10z" fill="#fff" /><path d="M19.500 5.500v4M1.500 0v2.500M4.500 0v2.500M.5 2.500h5V5L3 7zM3 7v4" />
            </svg>
          </TraySlot>
          <TraySlot $w={41}>
            <svg width="16" height="16" viewBox="0 0 16 16" fill="none" stroke="#fff" strokeWidth="1.200">
              <path d="M.6 15.500C1 7 7 1 15.500.8" opacity="0.700" /><path d="M4 15.500C4.500 9.500 9 5 15.500 4.500M7.500 15.500c.5-4 3.500-7 8-7.300M11 15.500c.5-2 2-3.500 4.500-3.700" /><circle cx="14" cy="14.500" r="1.300" fill="#fff" stroke="none" />
            </svg>
          </TraySlot>
          <TraySlot $w={37}>
            <svg width="21" height="16" viewBox="0 0 21 16" fill="none" stroke="#fff" strokeWidth="1.200">
              <path d="M.6 5h3l4-3.500v13L3.600 11h-3zM10.500 5.500q2 2.500 0 5M13.500 3.500q3.500 4.500 0 9" /><path d="M16.500 1q5 7 0 14" opacity="0.500" />
            </svg>
          </TraySlot>
          <TraySlot $w={48}>РУС</TraySlot>
          <TraySlot $w={3} />
          <Clock>20:36<br />02.05.2020</Clock>
          <TraySlot $w={58}>
            <svg width="20" height="20" viewBox="0 0 20 20"><path d="M0 0h20v16h-7l-3 4-3-4H0z" fill="#fff" /><path d="M4 4.500h12M4 8h12M4 11.500h8" stroke="#334b33" strokeWidth="1.200" /></svg>
          </TraySlot>
          <TraySlot $w={6} />
          <ShowDesktop />
        </Tray>
      </Taskbar>

      <Notification>
        <AliceIcon size={40} id="aliceNotice" />
        <NoticeText>
          <NoticeTitle>Алиса: погода на завтра</NoticeTitle>
          Зато будет сухо. Особенно дома. Завтра<br />
          пасмурно, без осадков. Днём 17...21 °C, ночью<br />
          11...13 °C
          <NoticeSource>yandex.ru</NoticeSource>
        </NoticeText>
        <NoticeActions>
          <svg width="15" height="15" viewBox="0 0 15 15" fill="none" stroke="#aaa" strokeWidth="1.200">
            <circle cx="7.500" cy="7.500" r="2" /><path d="M6.500.7h2l.4 1.800 1.400.6 1.600-1 1.300 1.400-1 1.500.6 1.400 1.800.4v1.800l-1.800.4-.6 1.400 1 1.600-1.400 1.300-1.500-1-1.400.6-.4 1.600h-2l-.4-1.700-1.400-.6-1.500 1-1.400-1.400 1-1.500-.6-1.400L.6 8.500v-2L2.300 6l.6-1.400-1-1.500 1.400-1.400 1.600 1 1.300-.6z" />
          </svg>
          <svg width="10" height="10" viewBox="0 0 10 10" fill="none" stroke="#999" strokeWidth="1.300"><path d="M.5.5l9 9M9.500.5l-9 9" /></svg>
        </NoticeActions>
      </Notification>

      <Watermark>
        <WatermarkTitle>Активация Windows</WatermarkTitle>
        Чтобы активировать Windows, перейдите в раздел<br />
        "Параметры".
      </Watermark>
    </Screen>
  );
}
